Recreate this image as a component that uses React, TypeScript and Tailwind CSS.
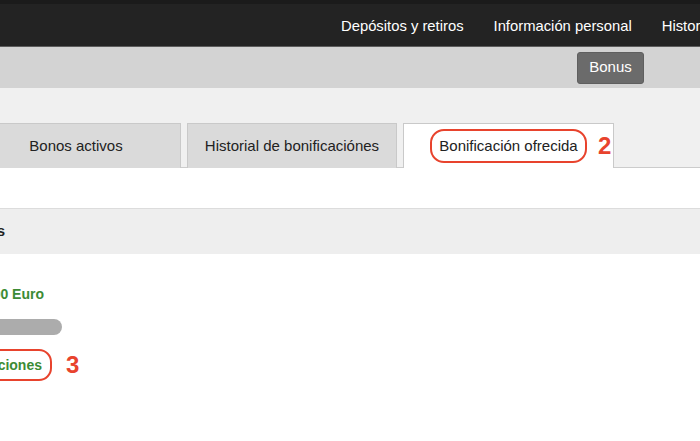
export default function App() {
  const nav = ['Depósitos y retiros', 'Información personal', 'Historial de transacciones'];
  const tabs = ['Bonos activos', 'Historial de bonificaciónes'];

  return (
    <div className="h-[441px] w-[700px] overflow-hidden bg-white font-['Liberation_Sans',Arial,sans-serif] text-[15px]">
      <header className="flex h-[47px] items-center border-t-4 border-b border-t-[#1b1b1b] border-b-[#5c5c5c] bg-[#232323] pt-[3px]">
        <nav className="ml-[326px] flex whitespace-nowrap text-[14.8px] text-white">
          {nav.map((item) => (
            <span key={item} className="px-[15px]">
              {item}
            </span>
          ))}
        </nav>
      </header>

      <div className="flex h-[41px] items-center justify-end bg-[#d3d3d3] pr-[56px]">
        <button className="flex h-[32px] w-[67px] items-center justify-center rounded-[3px] border border-[#5f5f5f] bg-[#6b6b6b] text-white">
          Bonus
        </button>
      </div>

      <div className="bg-[#f0f0f0] pt-[35px]">
        <div className="flex h-[45px] items-end border-b border-[#cccccc]">
          <div className="-mb-px -ml-[29px] flex gap-[6px]">
            {tabs.map((t) => (
              <div
                key={t}
                className="flex h-[45px] w-[210px] items-center justify-center border border-b-0 border-[#c9c9c9] bg-[#dadada] text-[#222]"
              >
                {t}
              </div>
            ))}
            <div className="flex h-[45px] w-[211px] items-center justify-center border border-b-0 border-[#c9c9c9] bg-white text-[#222]">
              <div className="relative">
                <div className="flex h-[34px] w-[157px] items-center justify-center rounded-[14px] border-[2.5px] border-[#e8432d]">
                  Bonificación ofrecida
                </div>
                <span className="absolute left-full top-1/2 ml-[11px] -translate-y-1/2 text-[24px] font-bold text-[#e8432d]">
                  2
                </span>
              </div>
            </div>
          </div>
        </div>
      </div>

      <div className="h-[40px] bg-white" />

      <div className="flex h-[46px] items-center border-t border-[#dcdcdc] bg-[#eeeeee]">
        <div className="-ml-[195px] w-[200px] whitespace-nowrap text-right font-bold text-[#222]">
          Bonos disponibles
        </div>
      </div>

      <div className="bg-white pt-[30px] text-[14px]">
        <div className="-ml-[156px] h-[20px] w-[200px] whitespace-nowrap text-right font-bold leading-[20px] text-[#3c8b35]">
          Bonificación de 100 Euro
        </div>
        <div className="mt-[15px] -ml-[138px] h-[16px] w-[200px] rounded-full bg-[#acacac]" />
        <div className="mt-[14px] flex items-center">
          <div className="-ml-[148px] flex h-[32px] w-[200px] items-center justify-end whitespace-nowrap rounded-[13px] border-[2.5px] border-[#e8432d] pr-[8px] font-bold text-[#3c8b35]">
            Ver condiciones
          </div>
          <span className="ml-[14px] text-[24px] font-bold leading-none text-[#e8432d]">3</span>
        </div>
      </div>
    </div>
  );
}
